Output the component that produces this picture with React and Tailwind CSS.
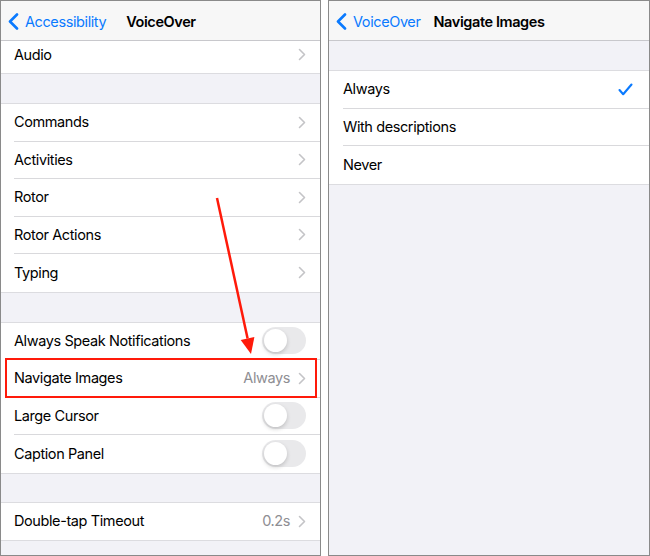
import React from "react";

const font = { fontFamily: '"Inter", "Liberation Sans", sans-serif' };

function Chevron() {
  return (
    <svg width="8" height="13" viewBox="0 0 8 13" className="shrink-0">
      <polyline points="1.5,1.5 6.5,6.5 1.5,11.5" fill="none" stroke="#c4c4c7" strokeWidth="1.6" strokeLinecap="round" strokeLinejoin="round" />
    </svg>
  );
}

function BackChevron() {
  return (
    <svg width="11" height="17" viewBox="0 0 11 17" className="shrink-0">
      <polyline points="9,1.5 2,8.5 9,15.5" fill="none" stroke="#0a7aff" strokeWidth="2.6" strokeLinecap="round" strokeLinejoin="round" />
    </svg>
  );
}

function Toggle() {
  return (
    <div className="w-[44px] h-[27px] rounded-full bg-[#e9e9eb] p-[2px] shrink-0">
      <div className="w-[23px] h-[23px] rounded-full bg-white shadow-[0_2px_4px_rgba(0,0,0,0.18)]" />
    </div>
  );
}

function Row({ label, value, chevron, toggle, check, last, height = "h-[37.5px]", indent = "pl-[13px]", extra = "" }) {
  return (
    <div className={`${indent} bg-white`}>
      <div className={`${height} ${extra} flex items-center pr-[14px] ${last ? "" : "border-b border-[#d9d9dc]"}`}>
        <span className="flex-1 text-[14.5px] tracking-[-0.4px] text-black">{label}</span>
        {value && <span className="text-[14.5px] tracking-[-0.4px] text-[#8e8e93] mr-[8px]">{value}</span>}
        {chevron && <Chevron />}
        {toggle && <Toggle />}
        {check && (
          <svg width="15" height="13" viewBox="0 0 15 13" className="mr-[2px]">
            <polyline points="1.5,7 5.2,11.2 13.5,1.5" fill="none" stroke="#0a7aff" strokeWidth="2.1" strokeLinecap="round" strokeLinejoin="round" />
          </svg>
        )}
      </div>
    </div>
  );
}

function Group({ children }) {
  return <div className="border-y border-[#dcdce0] bg-white">{children}</div>;
}

function NavBar({ back, title, titleGap }) {
  return (
    <div className="h-[40px] bg-[#f7f7f7] border-b border-[#c8c8cc] flex items-center pt-[2px] pl-[7px] shrink-0">
      <BackChevron />
      <span className="ml-[6px] text-[14.5px] tracking-[-0.4px] text-[#0a7aff]">{back}</span>
      <span className={`${titleGap} text-[14.5px] tracking-[-0.4px] font-semibold text-black`}>{title}</span>
    </div>
  );
}

export default function App() {
  return (
    <div className="w-[650px] h-[556px] bg-white flex" style={font}>
      <div className="relative w-[321px] h-full border border-[#8a8a8a] bg-[#f2f2f7] flex flex-col overflow-hidden">
        <NavBar back="Accessibility" title="VoiceOver" titleGap="ml-[20px]" />
        <div className="bg-white border-b border-[#dcdce0]">
          <Row label="Audio" chevron last height="h-[32px]" extra="pb-[5px]" />
        </div>
        <div className="h-[29px]" />
        <Group>
          <Row label="Commands" chevron />
          <Row label="Activities" chevron />
          <Row label="Rotor" chevron />
          <Row label="Rotor Actions" chevron />
          <Row label="Typing" chevron last />
        </Group>
        <div className="h-[29px]" />
        <Group>
          <Row label="Always Speak Notifications" toggle />
          <Row label="Navigate Images" value="Always" chevron />
          <Row label="Large Cursor" toggle />
          <Row label="Caption Panel" toggle last />
        </Group>
        <div className="h-[28px]" />
        <Group>
          <Row label="Double-tap Timeout" value="0.2s" chevron last />
        </Group>

        <div className="absolute left-[4px] top-[357px] w-[312px] h-[40px] border-2 border-[#ff1a0a]" />
        <svg className="absolute left-0 top-0 pointer-events-none" width="321" height="556">
          <line x1="216" y1="197" x2="246.6" y2="337.4" stroke="#ff1a0a" strokeWidth="2.5" />
          <polygon points="250,353 253.4,335.9 239.7,338.9" fill="#ff1a0a" />
        </svg>
      </div>

      <div className="ml-[7px] flex-1 h-full border border-[#8a8a8a] bg-[#f2f2f7] flex flex-col">
        <NavBar back="VoiceOver" title="Navigate Images" titleGap="ml-[13px]" />
        <div className="h-[29px]" />
        <Group>
          <Row label="Always" check indent="pl-[14px]" />
          <Row label="With descriptions" indent="pl-[14px]" />
          <Row label="Never" last indent="pl-[14px]" />
        </Group>
      </div>
    </div>
  );
}
